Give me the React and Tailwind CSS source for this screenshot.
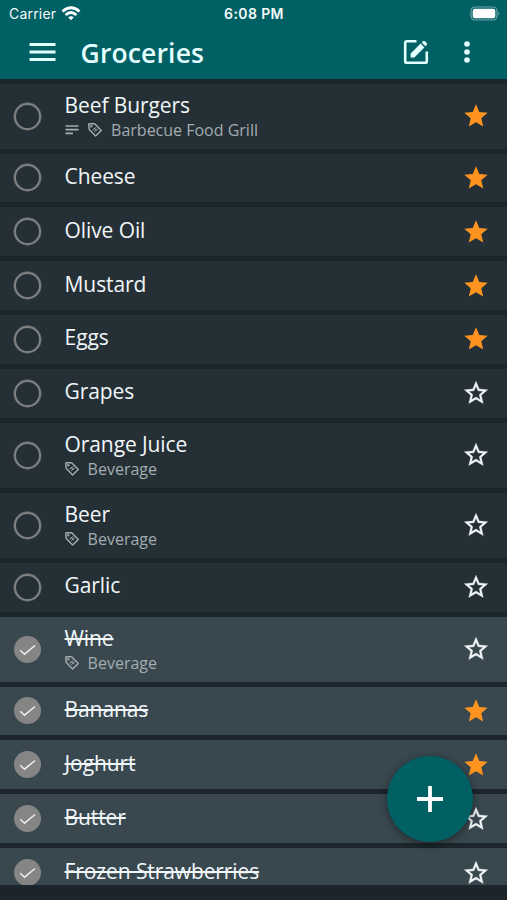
import React from "react";

const items = [
  { name: "Beef Burgers", tags: "Barbecue Food Grill", note: true, starred: true },
  { name: "Cheese", starred: true },
  { name: "Olive Oil", starred: true },
  { name: "Mustard", starred: true },
  { name: "Eggs", starred: true },
  { name: "Grapes" },
  { name: "Orange Juice", tags: "Beverage" },
  { name: "Beer", tags: "Beverage" },
  { name: "Garlic" },
  { name: "Wine", tags: "Beverage", done: true },
  { name: "Bananas", done: true, starred: true },
  { name: "Joghurt", done: true, starred: true },
  { name: "Butter", done: true },
  { name: "Frozen Strawberries", done: true },
];

function Star({ filled }) {
  return filled ? (
    <svg viewBox="0 0 24 24" className="size-7 shrink-0" fill="#ff9320">
      <path d="M12 17.27 18.18 21l-1.64-7.03L22 9.24l-7.19-.61L12 2 9.19 8.63 2 9.24l5.46 4.73L5.82 21z" />
    </svg>
  ) : (
    <svg viewBox="0 0 24 24" className="size-7 shrink-0" fill="#f1f6f9" stroke="#f1f6f9" strokeWidth="0.3">
      <path d="m22 9.24-7.19-.62L12 2 9.19 8.63 2 9.24l5.46 4.73L5.82 21 12 17.27 18.18 21l-1.63-7.03L22 9.24zM12 15.4l-3.76 2.27 1-4.28-3.32-2.88 4.38-.38L12 6.1l1.71 4.04 4.38.38-3.32 2.88 1 4.28L12 15.4z" />
    </svg>
  );
}

function TagIcon() {
  return (
    <svg viewBox="0 0 16 16" className="-ml-px size-4 shrink-0" fill="none" stroke="#a3acb0" strokeWidth="1.4" strokeLinejoin="round" strokeLinecap="round">
      <path d="M1.7 2.7 2.3 7.6 8.6 13.9 14.3 8.4 8.2 2.2Q7.7 1.7 7 1.7L2.6 1.7Q1.6 1.7 1.7 2.7Z" />
      <circle cx="4.3" cy="4.2" r=".5" />
      <path d="M6 7.9 8.8 5.6M7.6 9.4 10.4 7.1M7.2 6.4 9.2 8.6" strokeWidth="1" />
    </svg>
  );
}

function Check({ done }) {
  if (!done) return <div className="size-[27px] shrink-0 rounded-full border-2 border-[#7f8283] ring-[0.4px] ring-[#7f8283]" />;
  return (
    <div className="flex size-[27px] shrink-0 items-center justify-center rounded-full bg-[#858585]">
      <svg viewBox="0 0 27 27" className="size-full" fill="none" stroke="#eeeeee" strokeWidth="1.5">
        <path d="M6.2 14.2 10.5 18.2 21 9.5" />
      </svg>
    </div>
  );
}

function Row({ item }) {
  return (
    <li className={`shrink-0 py-[2.5px] ${item.tags ? "h-[70px]" : "h-[53.85px]"}`}>
      <div className={`flex h-full items-center pr-[17px] pl-[14.4px] ${item.done ? "bg-[#39484f]" : "bg-[#253036]"}`}>
        <Check done={item.done} />
        <div className="ml-[23.2px] flex-1">
          <div className={`text-[21px] leading-[26px] tracking-[-0.1px] text-[#f1f6f9] ${item.tags ? "mt-px" : "-mt-[4px]"} ${item.done ? "line-through decoration-2" : ""}`}>
            {item.name}
          </div>
          {item.tags && (
            <div className="flex h-6 items-center text-[16px] leading-6 text-[#a3acb0]">
              {item.note && (
                <svg viewBox="0 0 14 10" className="mr-[9.5px] h-2.5 w-3.5" fill="none" stroke="#a3acb0" strokeWidth="1.7">
                  <path d="M.5 1h13M.5 4.7h13M.5 8.4h7.5" />
                </svg>
              )}
              <TagIcon />
              <span className="ml-2">{item.tags}</span>
            </div>
          )}
        </div>
        <Star filled={item.starred} />
      </div>
    </li>
  );
}

function StatusBar() {
  return (
    <div className="grid h-[27px] grid-cols-3 items-center pr-[6px] pl-[9px] font-['Inter',sans-serif] text-[14px] leading-[27px] text-[#f4fafa]">
      <div className="flex items-center gap-[5px]">
        <span className="tracking-[0.2px]">Carrier</span>
        <svg viewBox="0 0 20 15" className="h-[15px] w-5" fill="none" stroke="white" strokeWidth="2.9">
          <path d="M1.5 5.5Q10-2 18.5 5.5M4.6 9Q10 4.2 15.4 9" />
          <path d="M7.2 11.3Q10 9.1 12.8 11.3L10 14.2Z" fill="white" stroke="none" />
        </svg>
      </div>
      <span className="-ml-[2px] text-center font-semibold tracking-[0.4px]">6:08 PM</span>
      <svg viewBox="0 0 31 15" className="h-[15px] w-[31px] justify-self-end" fill="none">
        <rect x="1" y="1" width="26" height="13" rx="4" stroke="#6da4a7" strokeWidth="1.2" />
        <rect x="2.7" y="2.7" width="22.6" height="9.6" rx="2.2" fill="white" />
        <path d="M28.5 5.5Q30.5 7.5 28.5 9.5Z" fill="#6da4a7" />
      </svg>
    </div>
  );
}

export default function App() {
  return (
    <div className="relative flex h-[900px] w-[507px] flex-col overflow-hidden bg-[#1b252b] font-['Open_Sans','Noto_Sans',sans-serif]">
      <header className="h-[79px] shrink-0 bg-[#006064]">
        <StatusBar />
        <div className="flex h-[50px] items-center pr-[37.5px] pl-[29px]">
          <svg viewBox="0 0 27 20" className="h-5 w-[27px]" fill="none" stroke="#e4ffff" strokeWidth="3">
            <path d="M.5 2.5h26M.5 10h26M.5 17.5h26" />
          </svg>
          <h1 className="mt-0.5 ml-[24.5px] flex-1 text-[26.5px] leading-[50px] font-semibold tracking-[0.15px] text-[#e4ffff]">Groceries</h1>
          <svg viewBox="0 0 26 26" className="size-[26px]" fill="none" stroke="#e4ffff" strokeWidth="2.6">
            <path d="M13.5 2.2H3.8Q2.2 2.2 2.2 3.8V22.2Q2.2 23.8 3.8 23.8H22.2Q23.8 23.8 23.8 22.2V12.5" />
            <path d="M7.6 18.4V14.6L17.6 4.6 21.4 8.4 11.4 18.4ZM18.7 3.5 20 2.2Q21 1.5 21.9 2.3L23.7 4.1Q24.4 5 23.7 6L22.4 7.3Z" fill="#e4ffff" stroke="none" />
          </svg>
          <svg viewBox="0 0 6 22" className="ml-[35px] h-[22px] w-1.5" fill="#e4ffff">
            <circle cx="3" cy="3" r="2.8" />
            <circle cx="3" cy="11" r="2.8" />
            <circle cx="3" cy="19" r="2.8" />
          </svg>
        </div>
      </header>
      <main className="h-[806px] shrink-0 overflow-hidden pt-0.5">
        <ul className="flex flex-col">
          {items.map((item) => (
            <Row key={item.name} item={item} />
          ))}
        </ul>
      </main>
      <button aria-label="Add item" className="absolute top-[756px] left-[387px] flex size-[86px] items-center justify-center rounded-full bg-[#006064] shadow-[0_2px_9px_rgba(0,0,0,0.45)]">
        <svg viewBox="0 0 26 26" className="size-[26px]" stroke="white" strokeWidth="3.8">
          <path d="M13 0v26M0 13h26" />
        </svg>
      </button>
    </div>
  );
}
